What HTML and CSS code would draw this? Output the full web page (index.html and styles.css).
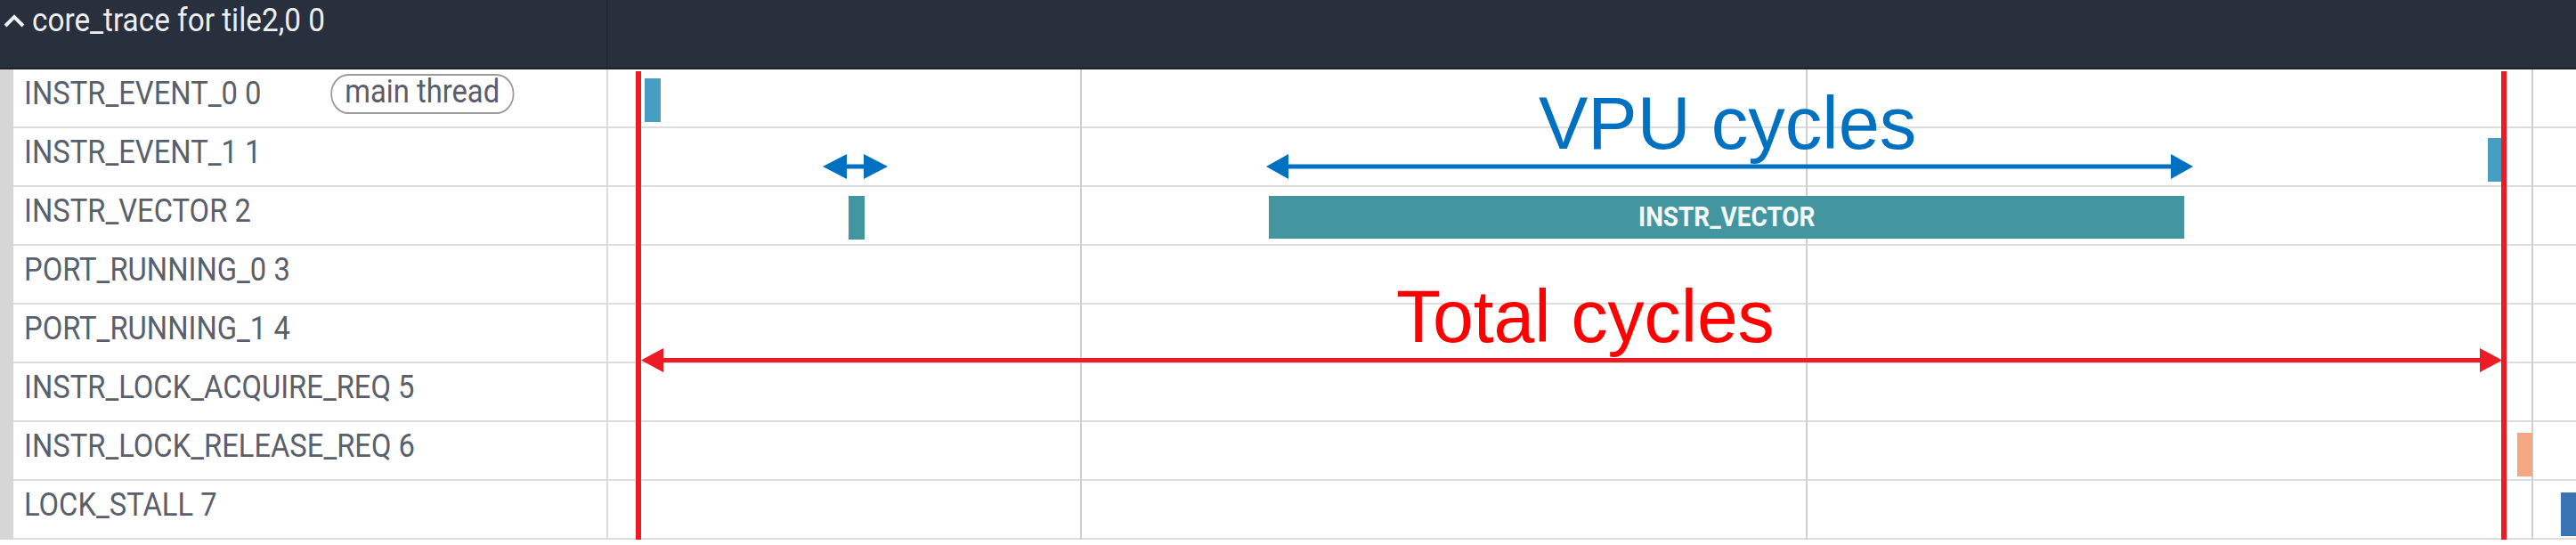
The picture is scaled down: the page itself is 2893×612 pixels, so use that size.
FILE: index.html
```html
<!DOCTYPE html>
<html>
<head>
<meta charset="utf-8">
<link rel="stylesheet" href="styles.css">
</head>
<body>
<div class="panel">
  <header class="hdr">
    <div class="hdr-title">
      <svg class="caret" width="24" height="16" viewBox="0 0 24 16"><polyline points="2,13 12,3 22,13" fill="none" stroke="#eef0f2" stroke-width="4"/></svg>
      <span class="hdr-text">core_trace for tile2,0 0</span>
    </div>
    <div class="hdr-rest"></div>
  </header>
  <div class="tracks">
    <div class="row"><div class="gutter"></div><div class="cells"><div class="label"><div class="label-in"><span class="name">INSTR_EVENT_0 0</span><span class="pill"><span class="pill-text">main thread</span></span></div></div><div class="lane"></div></div></div>
    <div class="row"><div class="gutter"></div><div class="cells"><div class="label"><div class="label-in"><span class="name">INSTR_EVENT_1 1</span></div></div><div class="lane"></div></div></div>
    <div class="row"><div class="gutter"></div><div class="cells"><div class="label"><div class="label-in"><span class="name">INSTR_VECTOR 2</span></div></div><div class="lane"></div></div></div>
    <div class="row"><div class="gutter"></div><div class="cells"><div class="label"><div class="label-in"><span class="name">PORT_RUNNING_0 3</span></div></div><div class="lane"></div></div></div>
    <div class="row"><div class="gutter"></div><div class="cells"><div class="label"><div class="label-in"><span class="name">PORT_RUNNING_1 4</span></div></div><div class="lane"></div></div></div>
    <div class="row"><div class="gutter"></div><div class="cells"><div class="label"><div class="label-in"><span class="name">INSTR_LOCK_ACQUIRE_REQ 5</span></div></div><div class="lane"></div></div></div>
    <div class="row"><div class="gutter"></div><div class="cells"><div class="label"><div class="label-in"><span class="name">INSTR_LOCK_RELEASE_REQ 6</span></div></div><div class="lane"></div></div></div>
    <div class="row"><div class="gutter"></div><div class="cells"><div class="label"><div class="label-in"><span class="name">LOCK_STALL 7</span></div></div><div class="lane"></div></div></div>

    <div class="canvas">
      <div class="grid" style="left:530px"></div>
      <div class="grid" style="left:1345px"></div>
      <div class="grid" style="left:2160px"></div>

      <div class="slice blue" style="left:41px;top:10px;width:18px"></div>
      <div class="slice blue" style="left:2111px;top:77px;width:18px"></div>
      <div class="slice teal" style="left:270px;top:142px;width:18px"></div>
      <div class="slice teal vec" style="left:742px;top:142px;width:1028px"><span class="vec-text">INSTR_VECTOR</span></div>
      <div class="slice orange" style="left:2144px;top:408px;width:17px"></div>
      <div class="slice dblue" style="left:2193px;top:475px;width:20px"></div>

      <div class="redline" style="left:31px"></div>
      <div class="redline" style="left:2126px"></div>

      <svg class="arrow" style="left:241px;top:95px" width="73" height="28" viewBox="0 0 73 28" fill="#0070c0"><polygon points="0,14 27,0 27,28"/><polygon points="73,14 46,0 46,28"/><rect x="26" y="11.5" width="21" height="5"/></svg>
      <svg class="arrow" style="left:739px;top:95px" width="1041" height="28" viewBox="0 0 1041 28" fill="#0070c0"><polygon points="0,14 25,0 25,28"/><polygon points="1041,14 1016,0 1016,28"/><rect x="24" y="11.5" width="993" height="5"/></svg>
      <svg class="arrow" style="left:37px;top:313px" width="2090" height="28" viewBox="0 0 2090 28" fill="#ed1c24"><polygon points="0,13.5 25,0 25,27"/><polygon points="2090,13.5 2065,0 2065,27"/><rect x="24" y="11" width="2042" height="5"/></svg>

      <div class="note vpu">VPU cycles</div>
      <div class="note total">Total cycles</div>
    </div>
  </div>
</div>
</body>
</html>
```

FILE: styles.css
```css
html, body {
  margin: 0;
  padding: 0;
  background: #ffffff;
}
body {
  width: 2893px;
  height: 612px;
  overflow: hidden;
  font-family: "Roboto", "Liberation Sans", sans-serif;
}
.panel {
  width: 2893px;
}
.hdr {
  display: flex;
  height: 76px;
  background: #282f3d;
  border-bottom: 2px solid #1c212a;
}
.hdr-title {
  width: 681px;
  border-right: 2px solid #222935;
  display: flex;
  align-items: flex-start;
}
.caret {
  margin-left: 4px;
  margin-top: 16px;
  flex: none;
}
.hdr-text {
  display: inline-block;
  margin-left: 8px;
  padding-top: 1px;
  font-size: 37px;
  color: #eceef1;
  white-space: nowrap;
  transform: scaleX(0.9);
  transform-origin: left center;
}
.hdr-rest {
  flex: 1;
}
.tracks {
  position: relative;
}
.row {
  display: flex;
  height: 66px;
}
.gutter {
  width: 15px;
  background: #d6d6d6;
  flex: none;
}
.cells {
  flex: 1;
  display: flex;
  border-bottom: 2px solid #dcdcdc;
}
.label {
  width: 654px;
  padding-left: 12px;
  border-right: 2px solid #dcdcdc;
  overflow: hidden;
  flex: none;
}
.label-in {
  display: flex;
  align-items: flex-start;
  padding-top: 5px;
  white-space: nowrap;
  transform: scaleX(0.885);
  transform-origin: left top;
  font-size: 37px;
  color: #5a606b;
}
.name {
  line-height: normal;
}
.pill {
  margin-left: 88px;
  box-sizing: border-box;
  height: 45px;
  padding: 0 16px;
  border: 2px solid #9b9b9b;
  border-radius: 23px;
  display: flex;
  align-items: flex-start;
}
.pill-text {
  line-height: 35px;
  color: #5b5d6c;
}
.lane {
  flex: 1;
}
.canvas {
  position: absolute;
  left: 683px;
  top: 0;
  right: 0;
  bottom: 0;
  overflow: hidden;
}
.grid {
  position: absolute;
  top: 0;
  width: 2px;
  height: 528px;
  background: #cfcfcf;
}
.slice {
  position: absolute;
  height: 49px;
}
.blue { background: #479dc2; }
.teal { background: #4396a0; }
.orange { background: #f4a882; }
.dblue { background: #3a74b5; }
.vec {
  height: 48px;
  text-align: center;
  line-height: 48px;
}
.vec-text {
  display: inline-block;
  font-family: "Roboto", sans-serif;
  font-weight: 700;
  font-size: 31px;
  color: #f4fafa;
  transform: scaleX(0.9);
}
.redline {
  position: absolute;
  top: 2px;
  width: 6px;
  height: 528px;
  background: #ed1c24;
}
.arrow {
  position: absolute;
  display: block;
}
.note {
  position: absolute;
  font-family: "Liberation Sans", Arial, sans-serif;
  font-size: 83px;
  line-height: 83px;
  white-space: nowrap;
  transform-origin: left top;
}
.vpu {
  left: 1045px;
  top: 19px;
  color: #0070c0;
}
.total {
  left: 885px;
  top: 236px;
  color: #ff0000;
  transform: scaleX(0.99);
}
```
